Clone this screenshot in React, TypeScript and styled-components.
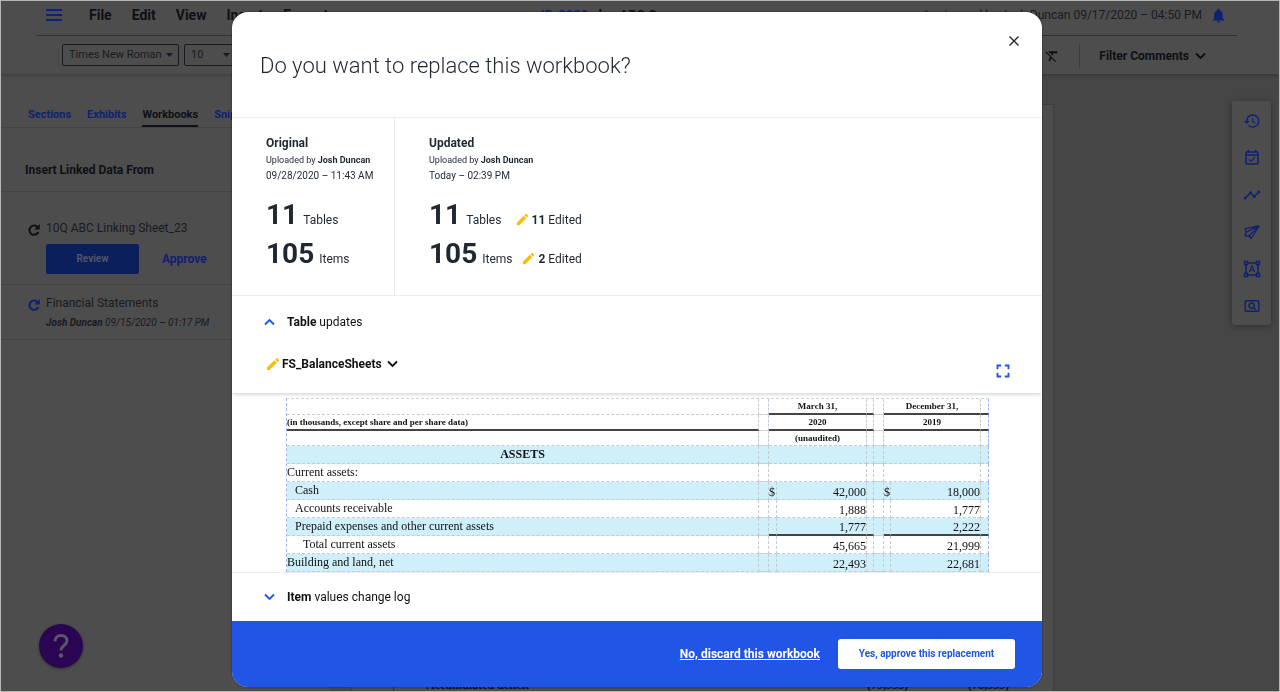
import React from "react";
import styled, { createGlobalStyle, css } from "styled-components";
import {
  MdEdit,
  MdFormatClear,
  MdFormatShapes,
  MdFullscreen,
  MdHistory,
  MdNotifications,
  MdOutlineEventAvailable,
  MdOutlinePageview,
  MdTimeline,
} from "react-icons/md";

const dim = {
  surface: "#4d4d4d",
  canvas: "#464646",
  line: "#434343",
  rule: "#2f3236",
  text: "#191b20",
  strong: "#0e1015",
  blue: "#0f2172",
  button: "#0a1f5c",
};

const ink = "#1f2733";
const blue = "#2055e5";

const GlobalStyle = createGlobalStyle`
  *, *::before, *::after { box-sizing: border-box; }
  body {
    margin: 0;
    background: ${dim.surface};
    font-family: Roboto, "Liberation Sans", sans-serif;
    font-size: 12px;
    line-height: 16px;
    color: ${ink};
  }
  button, select, input { font: inherit; color: inherit; }
  button { padding: 0; border: 0; background: none; cursor: pointer; }
  h1, h2, h3, p { margin: 0; font-size: inherit; }
  svg { display: block; flex: none; }
`;

/* ---------- Editor behind the dialog ---------- */

const Screen = styled.div`
  display: flex;
  flex-direction: column;
  height: 100vh;
  overflow: hidden;
  border: 1px solid #b4b8b4;
  color: ${dim.text};
`;

const Header = styled.header`
  position: relative;
  background: ${dim.surface};
  box-shadow: 0 1px 4px rgba(0, 0, 0, 0.25);
`;

const MenuBar = styled.div`
  display: flex;
  align-items: center;
  justify-content: space-between;
  height: 35px;
  margin: 0 42px 0 35px;
  padding: 0 10px 6px 10px;
  border-bottom: 1px solid ${dim.rule};
`;

const Menu = styled.nav`
  display: flex;
  align-items: center;
  gap: 20px;
  font-size: 14px;
  font-weight: 700;
  color: ${dim.strong};
`;

const MenuIconButton = styled.button`
  margin-right: 7px;
  color: ${dim.blue};
`;

const DocTitle = styled.p`
  margin-right: 48px;
  font-size: 13px;
  font-weight: 700;
  color: ${dim.strong};
  a {
    color: ${dim.blue};
    text-decoration: none;
  }
`;

const Saved = styled.div`
  display: flex;
  align-items: center;
  gap: 8px;
  svg {
    color: ${dim.blue};
  }
`;

const Toolbar = styled.div`
  display: flex;
  align-items: center;
  gap: 5px;
  height: 38px;
  padding: 0 73px 0 61px;
`;

const SelectBox = styled.div<{ $width: number }>`
  position: relative;
  width: ${(p) => p.$width}px;
  svg {
    position: absolute;
    right: 6px;
    top: 9px;
    pointer-events: none;
  }
`;

const Select = styled.select`
  display: block;
  width: 100%;
  height: 22px;
  padding: 0 6px;
  appearance: none;
  border: 1px solid ${dim.text};
  border-radius: 2px;
  background: transparent;
  font-size: 11px;
`;

const ToolbarEnd = styled.div`
  display: flex;
  align-items: center;
  gap: 19px;
  margin-left: auto;
  padding-top: 2px;
  color: ${dim.strong};
`;

const Divider = styled.span`
  width: 1px;
  height: 24px;
  background: #3a3d42;
`;

const FilterButton = styled.button`
  display: flex;
  align-items: center;
  gap: 6px;
  font-weight: 700;
`;

const Workspace = styled.div`
  display: flex;
  flex: 1;
  min-height: 0;
  background: ${dim.canvas};
`;

const Sidebar = styled.aside`
  width: 329px;
  flex: none;
  background: ${dim.surface};
`;

const Tabs = styled.div`
  display: flex;
  gap: 16px;
  height: 54px;
  padding: 30px 24px 0 27px;
  border-bottom: 1px solid ${dim.line};
`;

const Tab = styled.button<{ $active?: boolean }>`
  height: 23px;
  font-size: 11px;
  font-weight: 700;
  color: ${(p) => (p.$active ? dim.strong : dim.blue)};
  border-bottom: 2px solid ${(p) => (p.$active ? dim.strong : "transparent")};
`;

const SidebarTitle = styled.h2`
  padding: 34px 24px 13px;
  font-weight: 700;
  color: ${dim.strong};
  border-bottom: 1px solid ${dim.line};
`;

const Source = styled.section<{ $roomy?: boolean }>`
  display: flex;
  gap: 5px;
  padding: ${(p) => (p.$roomy ? "28px 24px 10px 26px" : "10px 24px 8px 26px")};
  border-bottom: 1px solid ${dim.line};
`;

const SourceIcon = styled.span<{ $color: string }>`
  padding-top: 3px;
  color: ${(p) => p.$color};
`;

const SourceActions = styled.div`
  display: flex;
  align-items: center;
  gap: 23px;
  margin-top: 8px;
`;

const ReviewButton = styled.button`
  width: 93px;
  height: 30px;
  border-radius: 2px;
  background: ${dim.button};
  color: #50556a;
  font-size: 10px;
  font-weight: 700;
`;

const ApproveButton = styled.button`
  font-weight: 700;
  color: ${dim.blue};
`;

const SourceMeta = styled.p`
  margin-top: 4px;
  font-size: 10px;
  font-style: italic;
`;

const Page = styled.main`
  display: flex;
  flex: 1;
  flex-direction: column;
  justify-content: flex-end;
  margin: 30px 0 0 21px;
  border: 1px solid #3e3e3e;
  border-bottom: 0;
  background: ${dim.surface};
`;

const PageRow = styled.div`
  display: flex;
  justify-content: space-between;
  height: 14px;
  margin-left: 41px;
  padding: 0 44px 0 32px;
  border-left: 1px solid ${dim.rule};
  font: 12px/16px "Liberation Serif", serif;
  color: ${dim.strong};
  span {
    display: flex;
    gap: 60px;
  }
`;

const Rail = styled.nav`
  display: flex;
  flex-direction: column;
  align-items: center;
  align-self: flex-start;
  gap: 19px;
  width: 39px;
  margin: 27px 8px 0 178px;
  padding: 11px 0 10px;
  border-radius: 3px;
  background: ${dim.surface};
  box-shadow: 0 1px 6px rgba(0, 0, 0, 0.35);
  color: ${dim.blue};
`;

const HelpButton = styled.button`
  position: fixed;
  left: 39px;
  bottom: 24px;
  display: grid;
  place-items: center;
  width: 44px;
  height: 44px;
  border-radius: 50%;
  background: #2a0652;
  box-shadow: 0 1px 3px rgba(0, 0, 0, 0.4);
  color: #5c5764;
`;

/* ---------- Dialog ---------- */

const Backdrop = styled.div`
  position: fixed;
  inset: 0;
  display: flex;
  align-items: flex-start;
  justify-content: center;
  padding: 12px 6px 0 0;
  overflow: hidden;
`;

const Dialog = styled.div`
  width: 100%;
  max-width: 810px;
  border-radius: 16px;
  overflow: hidden;
  background: #fff;
  box-shadow: 0 0 2px rgba(0, 0, 0, 0.5);
`;

const DialogHeader = styled.div`
  display: flex;
  align-items: flex-start;
  justify-content: space-between;
  height: 106px;
  padding: 23px 22px 0 28px;
  border-bottom: 1px solid #ededed;
`;

const Title = styled.h1`
  padding-top: 15px;
  font-size: 22px;
  line-height: 32px;
  font-weight: 300;
`;

const Compare = styled.div`
  display: flex;
  border-bottom: 1px solid #ededed;
`;

const Version = styled.section`
  min-width: 162px;
  padding: 17px 16px 22px 34px;
  & + & {
    border-left: 1px solid #ededed;
  }
`;

const VersionName = styled.h2`
  margin-bottom: 1px;
  font-weight: 700;
`;

const Uploader = styled.p`
  font-size: 9px;
  line-height: 17px;
`;

const Timestamp = styled.p`
  margin-bottom: 12px;
  font-size: 10px;
  line-height: 14px;
`;

const Stats = styled.div`
  width: fit-content;
`;

const Stat = styled.div`
  display: flex;
  align-items: baseline;
  gap: 5px;
`;

const Count = styled.strong`
  font-size: 28px;
  line-height: 39px;
  font-weight: 700;
`;

const Edited = styled.span`
  margin-left: auto;
  padding-left: 4px;
  svg {
    display: inline-block;
    margin-right: 2px;
    vertical-align: -3px;
  }
`;

const Pencil = styled(MdEdit)`
  color: #fbbc05;
`;

const SectionToggle = styled.button<{ $last?: boolean }>`
  display: flex;
  align-items: center;
  gap: 12px;
  width: 100%;
  height: ${(p) => (p.$last ? 49 : 52)}px;
  padding: 0 32px;
  color: #111;
  ${(p) =>
    p.$last &&
    css`
      border-top: 1px solid #ededed;
    `}
  svg {
    color: ${blue};
  }
`;

const SheetBar = styled.div`
  display: flex;
  align-items: center;
  justify-content: space-between;
  height: 45px;
  padding: 0 28px 0 33px;
  box-shadow: 0 3px 3px -1px rgba(0, 0, 0, 0.14);
`;

const SheetButton = styled.button`
  display: flex;
  align-items: center;
  gap: 1px;
  padding-bottom: 13px;
  color: #111;
  font-weight: 700;
  svg:last-child {
    margin-left: 4px;
  }
`;

const ExpandButton = styled.button`
  color: ${blue};
`;

const SheetView = styled.div`
  padding: 5px 53px 0 54px;
`;

const Sheet = styled.table`
  width: 100%;
  table-layout: fixed;
  border-spacing: 0;
  border-top: 1px dashed #ccd3d8;
  border-left: 1px dashed #9fb4ee;
  font: 12px/14px "Liberation Serif", serif;
  color: #111;
`;

const Col = styled.col<{ $width?: number }>`
  width: ${(p) => (p.$width ? `${p.$width}px` : "auto")};
`;

const Row = styled.tr<{ $head?: boolean; $tint?: boolean }>`
  height: ${(p) => (p.$head ? 15 : 18)}px;
  background: ${(p) => (p.$tint ? "#cfeffb" : "transparent")};
  font-size: ${(p) => (p.$head ? 9 : 12)}px;
  font-weight: ${(p) => (p.$head ? 700 : 400)};
  line-height: ${(p) => (p.$head ? 13 : 14)}px;
`;

const Cell = styled.td<{
  $align?: "left" | "center" | "right";
  $indent?: number;
  $ruled?: boolean;
  $bold?: boolean;
  $low?: boolean;
}>`
  padding: ${(p) => (p.$low ? 0 : 1)}px 0 0 ${(p) => (p.$indent ?? 0) * 8}px;
  white-space: nowrap;
  text-align: ${(p) => p.$align ?? "left"};
  vertical-align: ${(p) => (p.$low ? "bottom" : "top")};
  font-weight: ${(p) => (p.$bold ? 700 : "inherit")};
  border-right: 1px dashed #c3ccd2;
  border-bottom: ${(p) => (p.$ruled ? "2px solid #444" : "1px dashed #c3ccd2")};
  &:last-child {
    border-right-color: #9fb4ee;
  }
`;

const DialogFooter = styled.div`
  display: flex;
  align-items: center;
  justify-content: flex-end;
  gap: 18px;
  height: 66px;
  padding: 0 27px;
  background: ${blue};
`;

const DiscardLink = styled.a`
  color: #fff;
  font-weight: 700;
  text-decoration: underline;
`;

const ConfirmButton = styled.button`
  min-width: 177px;
  height: 30px;
  padding: 0 18px;
  border-radius: 3px;
  background: #fff;
  color: ${blue};
  font-size: 10px;
  font-weight: 700;
`;

/* ---------- Icons ---------- */

function Chevron({ up = false }: { up?: boolean }) {
  return (
    <svg width="11" height="8" viewBox="0 0 11 8" fill="none" stroke="currentColor" strokeWidth="1.8" aria-hidden="true">
      <path d={up ? "M1 6.5 5.5 2 10 6.5" : "M1 1.5 5.5 6 10 1.5"} />
    </svg>
  );
}

function Caret() {
  return (
    <svg width="7" height="4" viewBox="0 0 7 4" fill="currentColor" aria-hidden="true">
      <path d="M0 0h7L3.5 4z" />
    </svg>
  );
}

function Hamburger() {
  return (
    <svg width="16" height="12" viewBox="0 0 16 12" stroke="currentColor" strokeWidth="2" aria-hidden="true">
      <path d="M0 1h16M0 6h16M0 11h16" />
    </svg>
  );
}

function Close() {
  return (
    <svg width="12" height="12" viewBox="0 0 12 12" stroke="currentColor" strokeWidth="1.4" aria-hidden="true">
      <path d="M1.5 1.5l9 9M10.5 1.5l-9 9" />
    </svg>
  );
}

function Refresh() {
  return (
    <svg width="14" height="14" viewBox="0 0 14 14" fill="none" stroke="currentColor" strokeWidth="2" aria-hidden="true">
      <path d="M10.600 4.200A4.600 4.600 0 1 0 11.300 9" />
      <path d="M12.800 1v5.600H7.200z" fill="currentColor" stroke="none" />
    </svg>
  );
}

function PaperPlane() {
  return (
    <svg
      width="18"
      height="18"
      viewBox="0 0 18 18"
      fill="none"
      stroke="currentColor"
      strokeWidth="1.3"
      strokeLinejoin="round"
      aria-hidden="true"
    >
      <path d="M16 3 2 5.600l1.200 3.600L2 12.800l4 .2L8.200 15.500z" />
      <path d="M16 3 3.200 9.200M16 3 6 13" />
    </svg>
  );
}

function Question() {
  return (
    <svg width="16" height="26" viewBox="0 0 16 26" fill="none" stroke="currentColor" strokeWidth="3" aria-hidden="true">
      <path d="M2 8.200C2 4.600 4.600 2.500 8 2.500s6 2.100 6 5.300c0 4.400-6 4.700-6 9.700" />
      <circle cx="8" cy="22.500" r="2.200" fill="currentColor" stroke="none" />
    </svg>
  );
}

/* ---------- Data ---------- */

type Line = {
  label: string;
  indent?: number;
  march?: string;
  december?: string;
  currency?: boolean;
  ruled?: boolean;
};

const lines: Line[] = [
  { label: "Current assets:" },
  { label: "Cash", indent: 1, march: "42,000", december: "18,000", currency: true },
  { label: "Accounts receivable", indent: 1, march: "1,888", december: "1,777" },
  {
    label: "Prepaid expenses and other current assets",
    indent: 1,
    march: "1,777",
    december: "2,222",
    ruled: true,
  },
  { label: "Total current assets", indent: 2, march: "45,665", december: "21,999" },
  { label: "Building and land, net", march: "22,493", december: "22,681" },
];

const columns = [undefined, 10, 8, 90, 7, 10, 7, 90, 8];

function Amount({ line, value }: { line: Line; value?: string }) {
  if (!value) {
    return (
      <>
        <Cell colSpan={2} />
        <Cell />
      </>
    );
  }
  return (
    <>
      <Cell $low $ruled={line.ruled}>
        {line.currency ? "$" : ""}
      </Cell>
      <Cell $low $align="right" $ruled={line.ruled}>
        {value}
      </Cell>
      <Cell $ruled={line.ruled} />
    </>
  );
}

function BalanceSheet() {
  return (
    <Sheet>
      <colgroup>
        {columns.map((width, i) => (
          <Col key={i} $width={width} />
        ))}
      </colgroup>
      <tbody>
        <Row $head>
          <Cell />
          <Cell />
          <Cell colSpan={2} $align="center" $ruled>March 31,</Cell>
          <Cell $ruled />
          <Cell />
          <Cell colSpan={2} $align="center" $ruled>December 31,</Cell>
          <Cell $ruled />
        </Row>
        <Row $head>
          <Cell $ruled>(in thousands, except share and per share data)</Cell>
          <Cell />
          <Cell colSpan={2} $align="center" $ruled>2020</Cell>
          <Cell $ruled />
          <Cell />
          <Cell colSpan={2} $align="center" $ruled>2019</Cell>
          <Cell $ruled />
        </Row>
        <Row $head>
          <Cell />
          <Cell />
          <Cell colSpan={2} $align="center">(unaudited)</Cell>
          <Cell />
          <Cell />
          <Cell colSpan={2} />
          <Cell />
        </Row>
        <Row $tint>
          <Cell $align="center" $bold>ASSETS</Cell>
          <Cell />
          <Cell colSpan={2} />
          <Cell />
          <Cell />
          <Cell colSpan={2} />
          <Cell />
        </Row>
        {lines.map((line, i) => (
          <Row key={line.label} $tint={i % 2 === 1}>
            <Cell $indent={line.indent}>{line.label}</Cell>
            <Cell />
            <Amount line={line} value={line.march} />
            <Cell />
            <Amount line={line} value={line.december} />
          </Row>
        ))}
      </tbody>
    </Sheet>
  );
}

function VersionStat({ count, label, edited }: { count: number; label: string; edited?: number }) {
  return (
    <Stat>
      <Count>{count}</Count>
      <span>{label}</span>
      {edited !== undefined && (
        <Edited>
          <Pencil size={15} aria-hidden="true" />
          <strong>{edited}</strong> Edited
        </Edited>
      )}
    </Stat>
  );
}

function Editor() {
  return (
    <Screen>
      <Header>
        <MenuBar>
          <Menu aria-label="Main menu">
            <MenuIconButton aria-label="Open menu">
              <Hamburger />
            </MenuIconButton>
            <button>File</button>
            <button>Edit</button>
            <button>View</button>
            <button>Insert</button>
            <button>Format</button>
          </Menu>
          <DocTitle>
            <a href="#document">ID-2020</a> plan ABC Co
          </DocTitle>
          <Saved>
            <span>Last saved by Josh Duncan 09/17/2020 – 04:50 PM</span>
            <MdNotifications size={17} aria-hidden="true" />
          </Saved>
        </MenuBar>
        <Toolbar>
          <SelectBox $width={117}>
            <Select aria-label="Font family" defaultValue="Times New Roman">
              <option>Times New Roman</option>
            </Select>
            <Caret />
          </SelectBox>
          <SelectBox $width={52}>
            <Select aria-label="Font size" defaultValue="10">
              <option>10</option>
            </Select>
            <Caret />
          </SelectBox>
          <ToolbarEnd>
            <MdFormatClear size={16} aria-hidden="true" />
            <Divider />
            <FilterButton>
              Filter Comments <Chevron />
            </FilterButton>
          </ToolbarEnd>
        </Toolbar>
      </Header>
      <Workspace>
        <Sidebar>
          <Tabs>
            <Tab>Sections</Tab>
            <Tab>Exhibits</Tab>
            <Tab $active>Workbooks</Tab>
            <Tab>Snippets</Tab>
          </Tabs>
          <SidebarTitle>Insert Linked Data From</SidebarTitle>
          <Source $roomy>
            <SourceIcon $color={dim.strong}>
              <Refresh />
            </SourceIcon>
            <div>
              <p>10Q ABC Linking Sheet_23</p>
              <SourceActions>
                <ReviewButton>Review</ReviewButton>
                <ApproveButton>Approve</ApproveButton>
              </SourceActions>
            </div>
          </Source>
          <Source>
            <SourceIcon $color={dim.blue}>
              <Refresh />
            </SourceIcon>
            <div>
              <p>Financial Statements</p>
              <SourceMeta>
                <strong>Josh Duncan</strong> 09/15/2020 – 01:17 PM
              </SourceMeta>
            </div>
          </Source>
        </Sidebar>
        <Page>
          <PageRow>
            <strong>Accumulated deficit</strong>
            <span>
              <b>(79,953)</b>
              <b>(78,555)</b>
            </span>
          </PageRow>
        </Page>
        <Rail aria-label="Tools">
          <MdHistory size={18} aria-hidden="true" />
          <MdOutlineEventAvailable size={18} aria-hidden="true" />
          <MdTimeline size={18} aria-hidden="true" />
          <PaperPlane />
          <MdFormatShapes size={18} aria-hidden="true" />
          <MdOutlinePageview size={18} aria-hidden="true" />
        </Rail>
      </Workspace>
      <HelpButton aria-label="Help">
        <Question />
      </HelpButton>
    </Screen>
  );
}

export default function App() {
  return (
    <>
      <GlobalStyle />
      <Editor />
      <Backdrop>
        <Dialog role="dialog" aria-modal="true" aria-labelledby="dialog-title">
          <DialogHeader>
            <Title id="dialog-title">Do you want to replace this workbook?</Title>
            <button aria-label="Close">
              <Close />
            </button>
          </DialogHeader>
          <Compare>
            <Version>
              <VersionName>Original</VersionName>
              <Uploader>
                Uploaded by <strong>Josh Duncan</strong>
              </Uploader>
              <Timestamp>09/28/2020 – 11:43 AM</Timestamp>
              <Stats>
                <VersionStat count={11} label="Tables" />
                <VersionStat count={105} label="Items" />
              </Stats>
            </Version>
            <Version>
              <VersionName>Updated</VersionName>
              <Uploader>
                Uploaded by <strong>Josh Duncan</strong>
              </Uploader>
              <Timestamp>Today – 02:39 PM</Timestamp>
              <Stats>
                <VersionStat count={11} label="Tables" edited={11} />
                <VersionStat count={105} label="Items" edited={2} />
              </Stats>
            </Version>
          </Compare>
          <SectionToggle aria-expanded="true">
            <Chevron up />
            <span>
              <strong>Table</strong> updates
            </span>
          </SectionToggle>
          <SheetBar>
            <SheetButton>
              <Pencil size={16} aria-hidden="true" />
              FS_BalanceSheets
              <Chevron />
            </SheetButton>
            <ExpandButton aria-label="Full screen">
              <MdFullscreen size={22} />
            </ExpandButton>
          </SheetBar>
          <SheetView>
            <BalanceSheet />
          </SheetView>
          <SectionToggle $last aria-expanded="false">
            <Chevron />
            <span>
              <strong>Item</strong> values change log
            </span>
          </SectionToggle>
          <DialogFooter>
            <DiscardLink href="#discard">No, discard this workbook</DiscardLink>
            <ConfirmButton>Yes, approve this replacement</ConfirmButton>
          </DialogFooter>
        </Dialog>
      </Backdrop>
    </>
  );
}
